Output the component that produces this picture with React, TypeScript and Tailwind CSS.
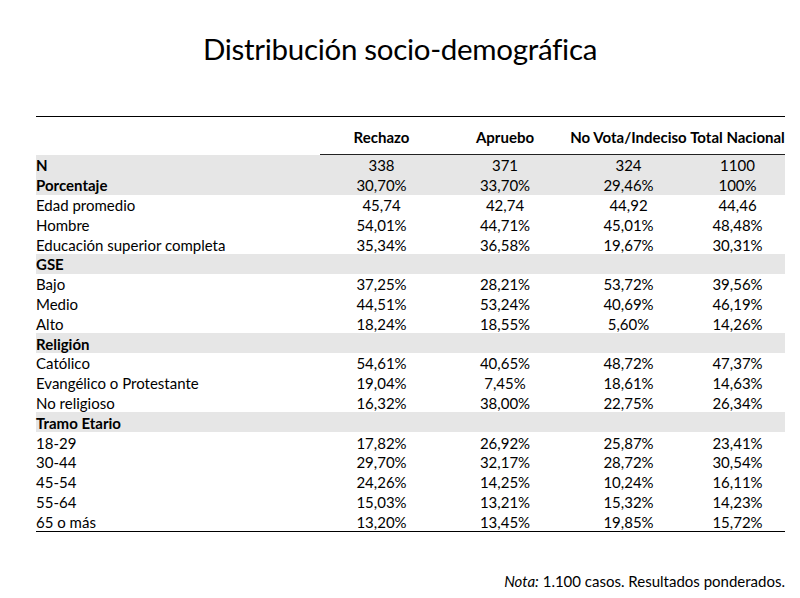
import React from "react";

type Row = {
  label: string;
  values?: string[];
  bold?: boolean;
  shaded?: boolean;
};

const rows: Row[] = [
  { label: "N", values: ["338", "371", "324", "1100"], bold: true, shaded: true },
  { label: "Porcentaje", values: ["30,70%", "33,70%", "29,46%", "100%"], bold: true, shaded: true },
  { label: "Edad promedio", values: ["45,74", "42,74", "44,92", "44,46"] },
  { label: "Hombre", values: ["54,01%", "44,71%", "45,01%", "48,48%"] },
  { label: "Educación superior completa", values: ["35,34%", "36,58%", "19,67%", "30,31%"] },
  { label: "GSE", bold: true, shaded: true },
  { label: "Bajo", values: ["37,25%", "28,21%", "53,72%", "39,56%"] },
  { label: "Medio", values: ["44,51%", "53,24%", "40,69%", "46,19%"] },
  { label: "Alto", values: ["18,24%", "18,55%", "5,60%", "14,26%"] },
  { label: "Religión", bold: true, shaded: true },
  { label: "Católico", values: ["54,61%", "40,65%", "48,72%", "47,37%"] },
  { label: "Evangélico o Protestante", values: ["19,04%", "7,45%", "18,61%", "14,63%"] },
  { label: "No religioso", values: ["16,32%", "38,00%", "22,75%", "26,34%"] },
  { label: "Tramo Etario", bold: true, shaded: true },
  { label: "18-29", values: ["17,82%", "26,92%", "25,87%", "23,41%"] },
  { label: "30-44", values: ["29,70%", "32,17%", "28,72%", "30,54%"] },
  { label: "45-54", values: ["24,26%", "14,25%", "10,24%", "16,11%"] },
  { label: "55-64", values: ["15,03%", "13,21%", "15,32%", "14,23%"] },
  { label: "65 o más", values: ["13,20%", "13,45%", "19,85%", "15,72%"] },
];

const headers = ["Rechazo", "Apruebo", "No Vota/Indeciso", "Total Nacional"];

export default function App() {
  return (
    <div className="w-[800px] h-[598px] bg-white text-black font-['Lato',_'Liberation_Sans',_sans-serif] overflow-hidden">
      <h1 className="pt-[29px] h-[116px] text-center text-[29.5px] leading-[40px] tracking-[-0.3px]">
        Distribución socio-demográfica
      </h1>

      <div className="ml-[36px] w-[749px] border-t-[1.5px] border-black text-[15px]">
        {/* header */}
        <div className="grid grid-cols-[284px_123px_124px_123px_95px] h-[38px]">
          <div />
          {headers.map((h) => (
            <div
              key={h}
              className="flex items-center justify-center pt-[4px] font-bold whitespace-nowrap border-b-[1.5px] border-[#222]"
            >
              {h}
            </div>
          ))}
        </div>

        {/* body */}
        <div className="border-b-[1.5px] border-black">
          {rows.map((r) => (
            <div
              key={r.label}
              className={`grid grid-cols-[284px_123px_124px_123px_95px] h-[19.8px] items-center pt-[2px] leading-none ${
                r.shaded ? "bg-[#e6e6e6]" : ""
              }`}
            >
              <div className={r.bold ? "font-bold" : ""}>{r.label}</div>
              {(r.values ?? ["", "", "", ""]).map((v, i) => (
                <div key={i} className="text-center">
                  {v}
                </div>
              ))}
            </div>
          ))}
        </div>
      </div>

      <p className="w-[785px] mt-[38px] text-right text-[15px]">
        <span className="italic">Nota:</span> 1.100 casos. Resultados ponderados.
      </p>
    </div>
  );
}
